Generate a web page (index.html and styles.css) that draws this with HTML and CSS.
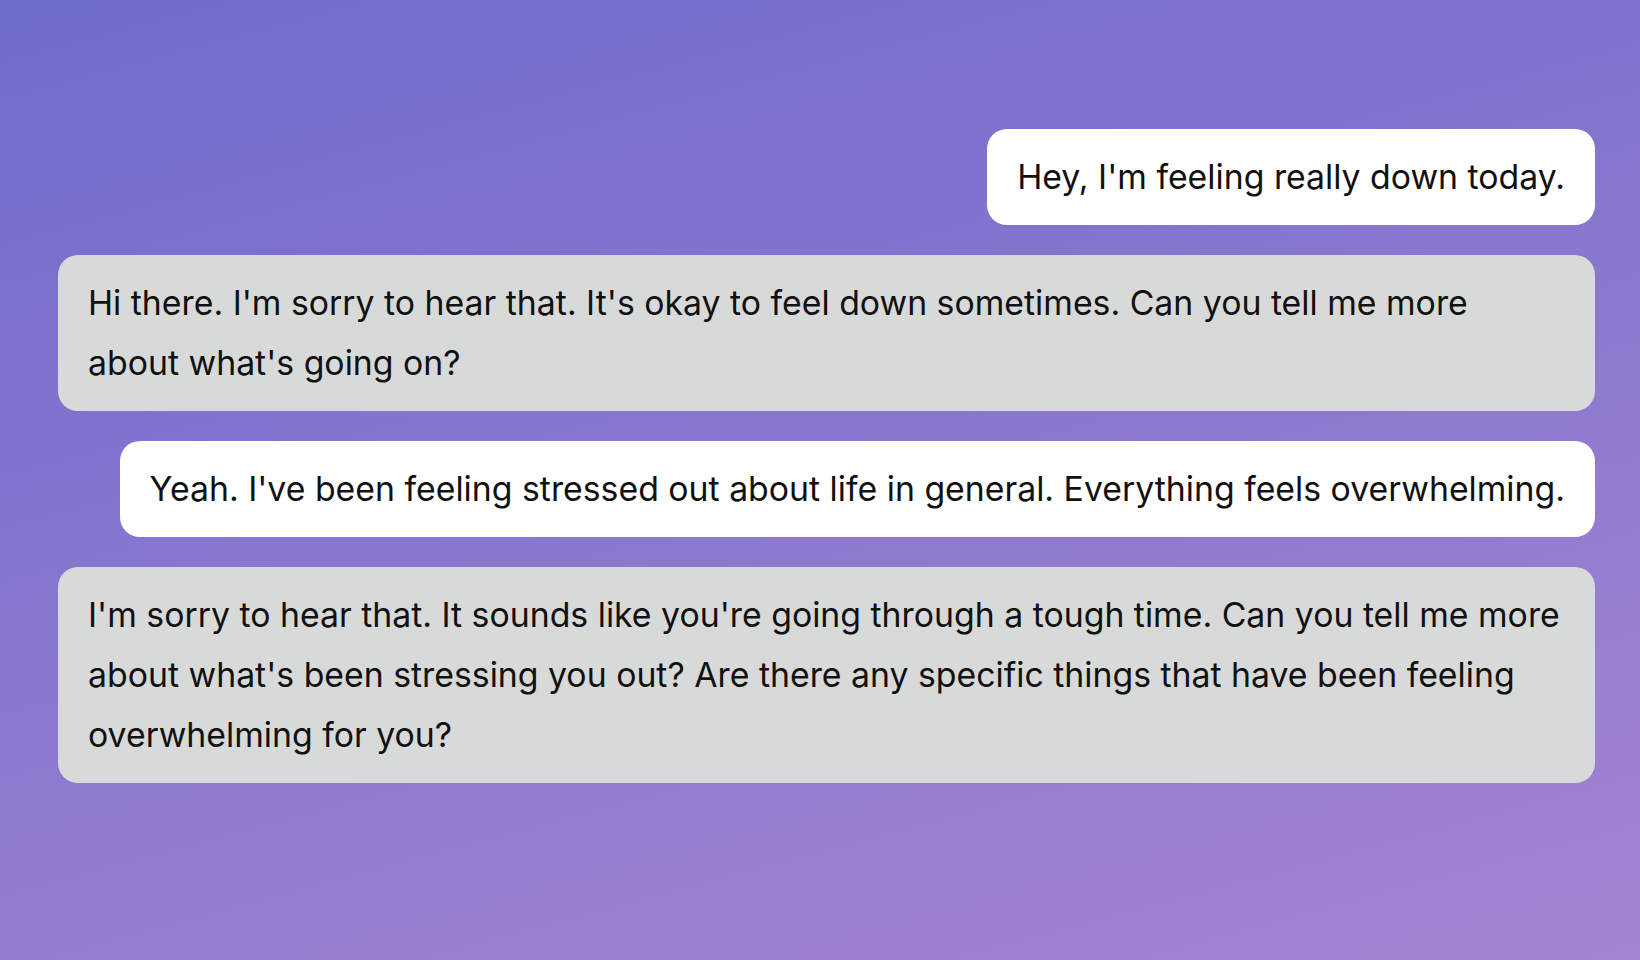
FILE: index.html
```html
<!DOCTYPE html>
<html lang="en">
<head>
<meta charset="utf-8">
<title>Chat</title>
<link rel="stylesheet" href="styles.css">
</head>
<body>
<main class="chat">
  <div class="msg user">Hey, I'm feeling really down today.</div>
  <div class="msg bot">Hi there. I'm sorry to hear that. It's okay to feel down sometimes. Can you tell me more about what's going on?</div>
  <div class="msg user">Yeah. I've been feeling stressed out about life in general. Everything feels overwhelming.</div>
  <div class="msg bot">I'm sorry to hear that. It sounds like you're going through a tough time. Can you tell me more about what's been stressing you out? Are there any specific things that have been feeling overwhelming for you?</div>
</main>
</body>
</html>
```

FILE: styles.css
```css
html, body {
  margin: 0;
  height: 100%;
}
body {
  background: linear-gradient(165deg, #6f6bcc 0%, #8a78cf 50%, #a485d1 100%);
  font-family: "Inter", "Noto Sans", sans-serif;
  color: #111;
  overflow: hidden;
}
.chat {
  display: flex;
  flex-direction: column;
  gap: 30px;
  padding: 129px 45px 0 58px;
}
.msg {
  font-size: 33.8px;
  line-height: 60px;
  padding: 18px 30px;
  border-radius: 20px;
}
.user {
  align-self: flex-end;
  background: #ffffff;
}
.bot {
  align-self: stretch;
  background: #d8d9d9;
}
```
